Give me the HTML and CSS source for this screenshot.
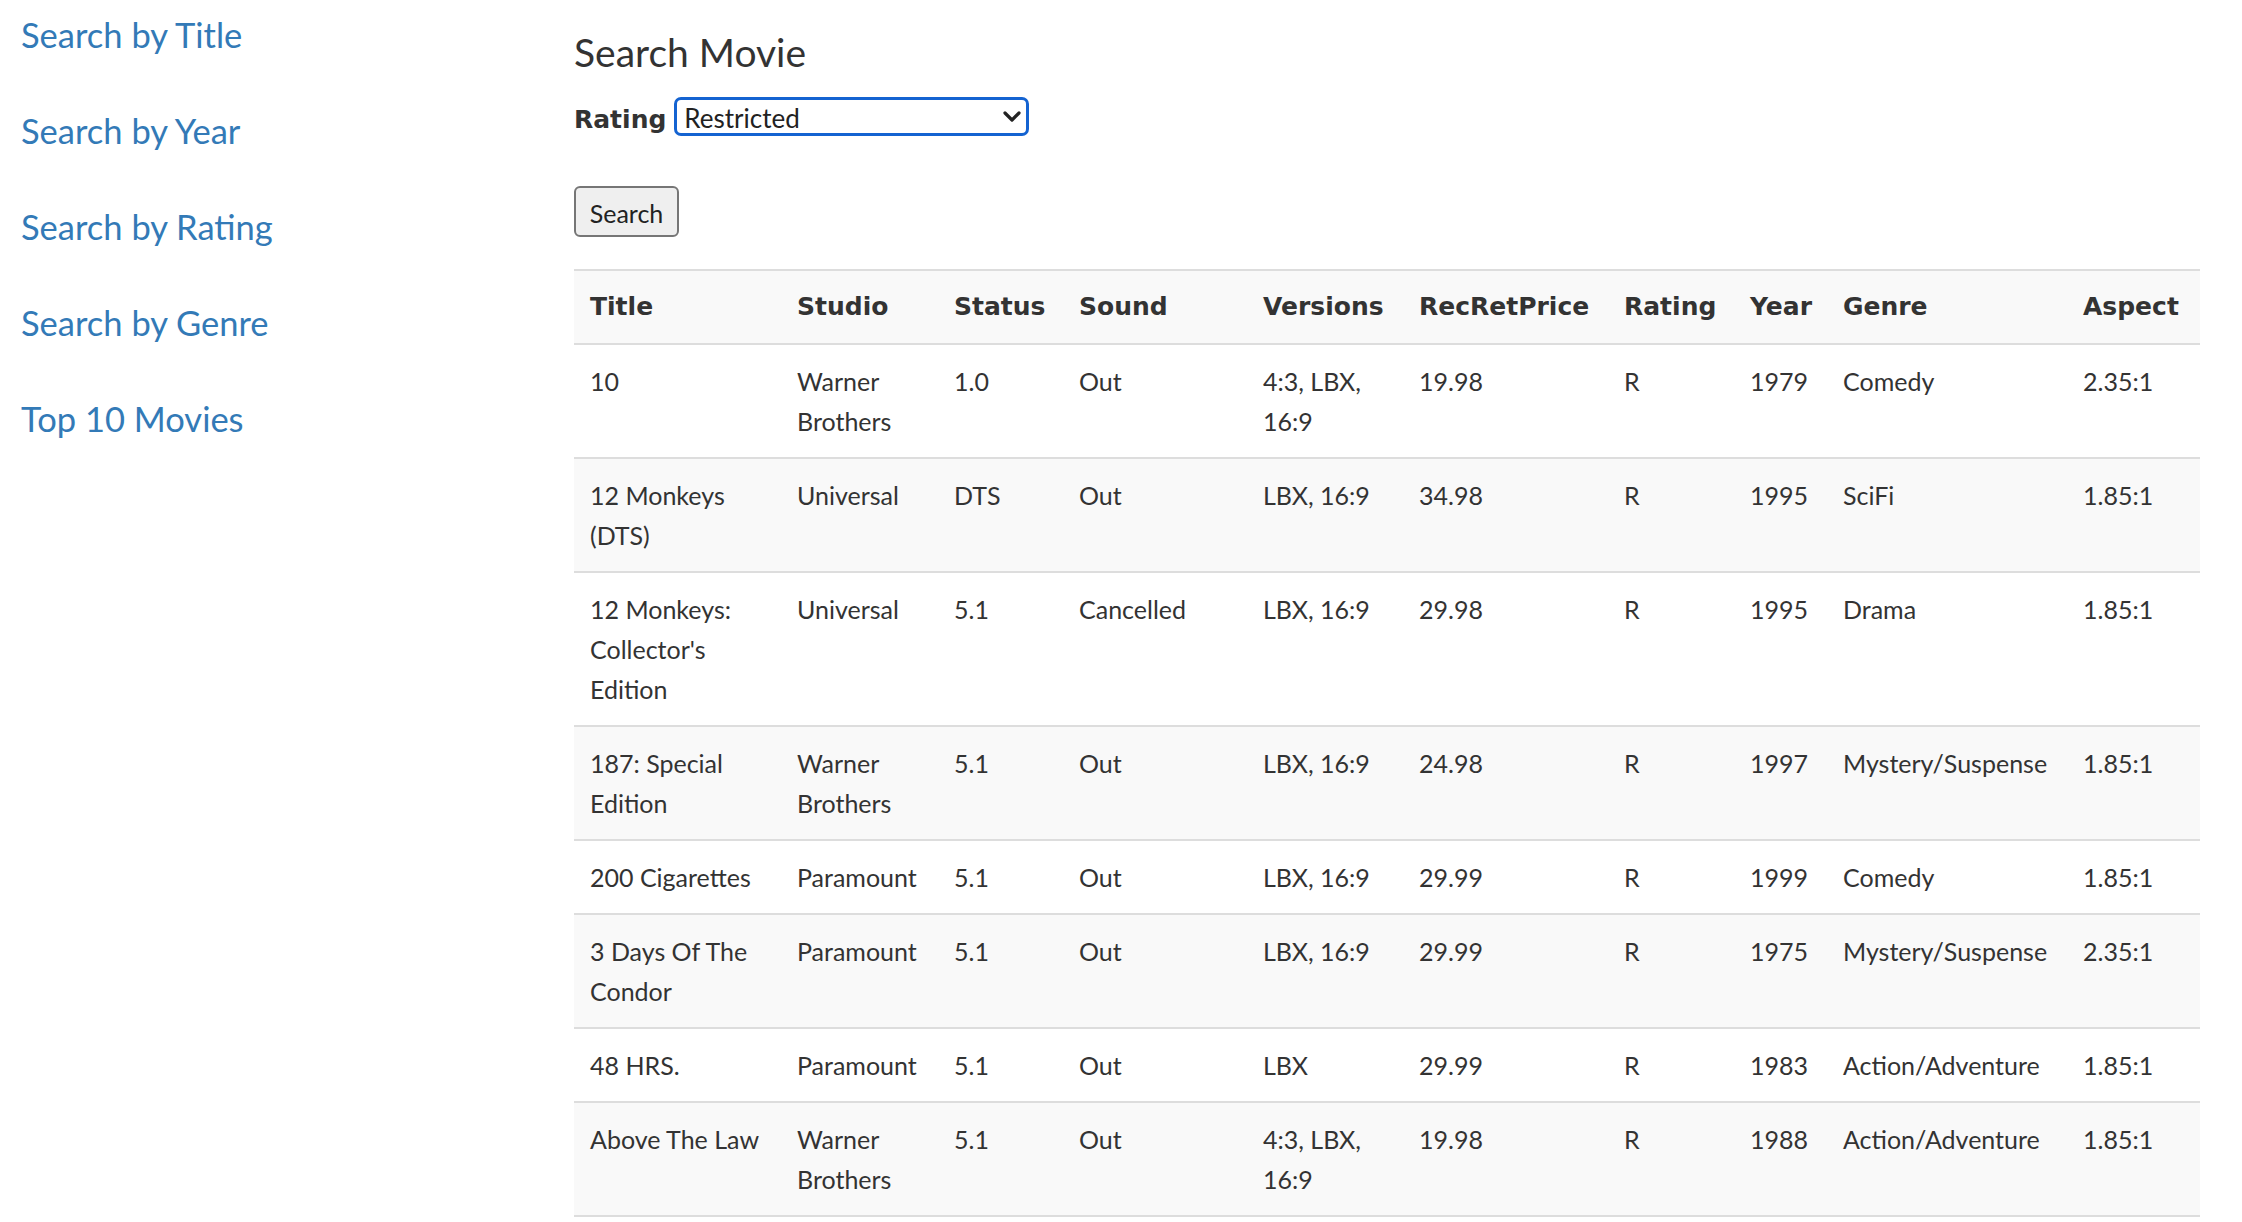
FILE: index.html
```html
<!DOCTYPE html>
<html lang="en">
<head>
<meta charset="utf-8">
<title>Search Movie</title>
<link rel="stylesheet" href="styles.css">
</head>
<body>
<div class="page">
  <nav class="sidebar">
    <ul class="nav-list">
      <li><a href="#">Search by Title</a></li>
      <li><a href="#">Search by Year</a></li>
      <li><a href="#">Search by Rating</a></li>
      <li><a href="#">Search by Genre</a></li>
      <li><a href="#">Top 10 Movies</a></li>
    </ul>
  </nav>
  <main class="main">
    <h1 class="title">Search Movie</h1>
    <form class="search-form">
      <div class="form-row">
        <label class="form-label" for="rating">Rating</label>
        <div class="select-wrap">
          <select id="rating" class="select">
            <option>G</option>
            <option>PG</option>
            <option>PG-13</option>
            <option selected>Restricted</option>
          </select>
          <svg class="chevron" width="18" height="11" viewBox="0 0 18 11"><path d="M2 2 L9 9 L16 2" fill="none" stroke="#222" stroke-width="3.2" stroke-linecap="round" stroke-linejoin="round"/></svg>
        </div>
      </div>
      <button type="button" class="btn">Search</button>
    </form>
    <table class="movies">
      <colgroup>
        <col class="c-title"><col class="c-studio"><col class="c-status"><col class="c-sound"><col class="c-versions"><col class="c-price"><col class="c-rating"><col class="c-year"><col class="c-genre"><col class="c-aspect">
      </colgroup>
      <tbody>
        <tr><th>Title</th><th>Studio</th><th>Status</th><th>Sound</th><th>Versions</th><th>RecRetPrice</th><th>Rating</th><th>Year</th><th>Genre</th><th>Aspect</th></tr>
        <tr><td>10</td><td>Warner Brothers</td><td>1.0</td><td>Out</td><td>4:3, LBX, 16:9</td><td>19.98</td><td>R</td><td>1979</td><td>Comedy</td><td>2.35:1</td></tr>
        <tr><td>12 Monkeys (DTS)</td><td>Universal</td><td>DTS</td><td>Out</td><td>LBX, 16:9</td><td>34.98</td><td>R</td><td>1995</td><td>SciFi</td><td>1.85:1</td></tr>
        <tr><td>12 Monkeys: Collector's Edition</td><td>Universal</td><td>5.1</td><td>Cancelled</td><td>LBX, 16:9</td><td>29.98</td><td>R</td><td>1995</td><td>Drama</td><td>1.85:1</td></tr>
        <tr><td>187: Special Edition</td><td>Warner Brothers</td><td>5.1</td><td>Out</td><td>LBX, 16:9</td><td>24.98</td><td>R</td><td>1997</td><td>Mystery/Suspense</td><td>1.85:1</td></tr>
        <tr><td>200 Cigarettes</td><td>Paramount</td><td>5.1</td><td>Out</td><td>LBX, 16:9</td><td>29.99</td><td>R</td><td>1999</td><td>Comedy</td><td>1.85:1</td></tr>
        <tr><td>3 Days Of The Condor</td><td>Paramount</td><td>5.1</td><td>Out</td><td>LBX, 16:9</td><td>29.99</td><td>R</td><td>1975</td><td>Mystery/Suspense</td><td>2.35:1</td></tr>
        <tr><td>48 HRS.</td><td>Paramount</td><td>5.1</td><td>Out</td><td>LBX</td><td>29.99</td><td>R</td><td>1983</td><td>Action/Adventure</td><td>1.85:1</td></tr>
        <tr><td>Above The Law</td><td>Warner Brothers</td><td>5.1</td><td>Out</td><td>4:3, LBX, 16:9</td><td>19.98</td><td>R</td><td>1988</td><td>Action/Adventure</td><td>1.85:1</td></tr>
      </tbody>
    </table>
  </main>
</div>
</body>
</html>
```

FILE: styles.css
```css
* { box-sizing: border-box; }

html, body {
  margin: 0;
  padding: 0;
  background: #fff;
}

body {
  font-family: "Lato", "Open Sans", sans-serif;
  color: #333;
}

.page {
  display: flex;
  align-items: flex-start;
}

.sidebar {
  width: 574px;
  flex: 0 0 574px;
  padding: 7px 0 0 21px;
}

.nav-list {
  list-style: none;
  margin: 0;
  padding: 0;
}

.nav-list li {
  margin: 0 0 40px 0;
}

.nav-list a {
  display: block;
  font-size: 34.5px;
  line-height: 56px;
  color: #337ab7;
  text-decoration: none;
}

.main {
  flex: 1 1 auto;
  padding: 28px 42px 0 0;
  min-width: 0;
}

.title {
  margin: 0;
  font-size: 39px;
  line-height: 48px;
  font-weight: 400;
  color: #333;
}

.search-form {
  display: flex;
  flex-direction: column;
  align-items: flex-start;
}

.form-row {
  display: flex;
  align-items: flex-start;
  gap: 8px;
  margin-top: 21px;
  height: 39px;
}

.form-label {
  font-family: "DejaVu Sans", "Lato", sans-serif;
  font-size: 25px;
  font-weight: 700;
  line-height: 39px;
  margin-top: 3px;
  min-width: 92px;
}

.select-wrap {
  position: relative;
  width: 355px;
  height: 39px;
}

.select {
  -webkit-appearance: none;
  appearance: none;
  width: 355px;
  height: 39px;
  margin: 0;
  border: 3px solid #1463d1;
  border-radius: 7px;
  background: #fff;
  padding: 2px 40px 0 7px;
  font-family: "Lato", "Open Sans", sans-serif;
  font-size: 26px;
  color: #222;
  outline: none;
}

.chevron {
  position: absolute;
  left: 329px;
  top: 14px;
  pointer-events: none;
}

.btn {
  margin-top: 50px;
  width: 105px;
  height: 51px;
  border: 2px solid #767676;
  border-radius: 6px;
  background: #efefef;
  font-family: "Lato", "Open Sans", sans-serif;
  font-size: 25px;
  color: #222;
  padding: 2px 0 0 0;
}

.movies {
  margin-top: 32px;
  width: 100%;
  table-layout: fixed;
  border-collapse: collapse;
  font-size: 25px;
  line-height: 40px;
}

.c-title { width: 207px; }
.c-studio { width: 157px; }
.c-status { width: 125px; }
.c-sound { width: 184px; }
.c-versions { width: 156px; }
.c-price { width: 205px; }
.c-rating { width: 126px; }
.c-year { width: 93px; }
.c-genre { width: 240px; }
.c-aspect { width: 133px; }

.movies th,
.movies td {
  padding: 16px;
  border-top: 2px solid #ddd;
  text-align: left;
  vertical-align: top;
}

.movies th {
  font-family: "DejaVu Sans", "Lato", sans-serif;
  font-weight: 700;
  color: #333;
}

.movies tr:nth-child(odd) {
  background: #f9f9f9;
}

.movies tr:last-child td {
  border-bottom: 2px solid #ddd;
}
```
